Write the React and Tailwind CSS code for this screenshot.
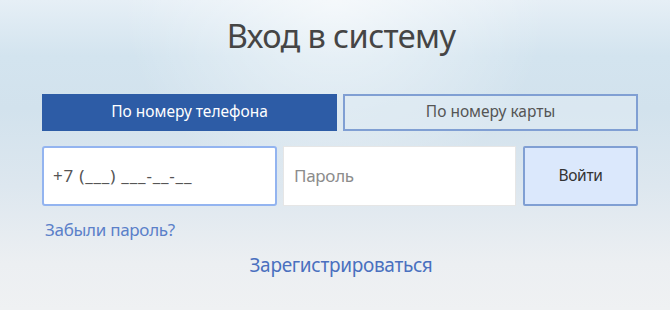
export default function App() {
  return (
    <div
      className="w-[670px] h-[310px] overflow-hidden relative bg-[linear-gradient(180deg,#e6eff6_0%,#d3e4ef_18%,#d2e2ed_35%,#dde7ef_60%,#eceff2_85%,#eff1f3_100%)]"
      style={{ fontFamily: '"Noto Sans", "Open Sans", sans-serif' }}
    >
      <div className="absolute inset-0 bg-[radial-gradient(ellipse_at_50%_0%,rgba(255,255,255,0.6)_0%,rgba(255,255,255,0)_45%)]" />
      <div className="relative flex flex-col">
        <h1 className="text-center pl-[12px] text-[32.5px] leading-none text-[#454545] mt-[20px] tracking-[-0.6px]">
          Вход в систему
        </h1>
        <div className="ml-[42px] w-[596px] mt-[41px] grid grid-cols-[295px_295px] gap-[6px]">
          <div className="h-[37px] bg-[#2d5ca6] text-white text-[15.5px] flex items-center justify-center tracking-[0px]">
            По номеру телефона
          </div>
          <div className="h-[37px] border-2 border-[#809fd3] bg-[#e0ebf3]/60 text-[#555] text-[15.5px] flex items-center justify-center">
            По номеру карты
          </div>
        </div>
        <div className="ml-[42px] w-[596px] mt-[15px] flex">
          <div className="w-[235px] h-[60px] bg-white border-2 border-[#93b4f0] rounded-[3px] flex items-center pl-[9px] text-[17px] text-[#555] tracking-[0.8px]">
            +7 (___) ___-__-__
          </div>
          <div className="ml-[6px] w-[233px] h-[60px] bg-white border border-[#e6e6e6] flex items-center pl-[10px] text-[17px] text-[#8c8c8c] tracking-[-0.3px]">
            Пароль
          </div>
          <div className="ml-[7px] w-[115px] h-[60px] bg-[#dbe8fc] border-2 border-[#809fd3] rounded-[2px] flex items-center justify-center text-[15.5px] text-[#333] tracking-[-0.3px]">
            Войти
          </div>
        </div>
        <div className="ml-[45px] mt-[12px] text-[17px] text-[#5b80c9] tracking-[-0.3px] leading-[24px]">
          Забыли пароль?
        </div>
        <div className="text-center pl-[12px] mt-[11px] text-[19px] text-[#4a70bf] tracking-[-0.3px] leading-[24px]">
          Зарегистрироваться
        </div>
      </div>
    </div>
  );
}
